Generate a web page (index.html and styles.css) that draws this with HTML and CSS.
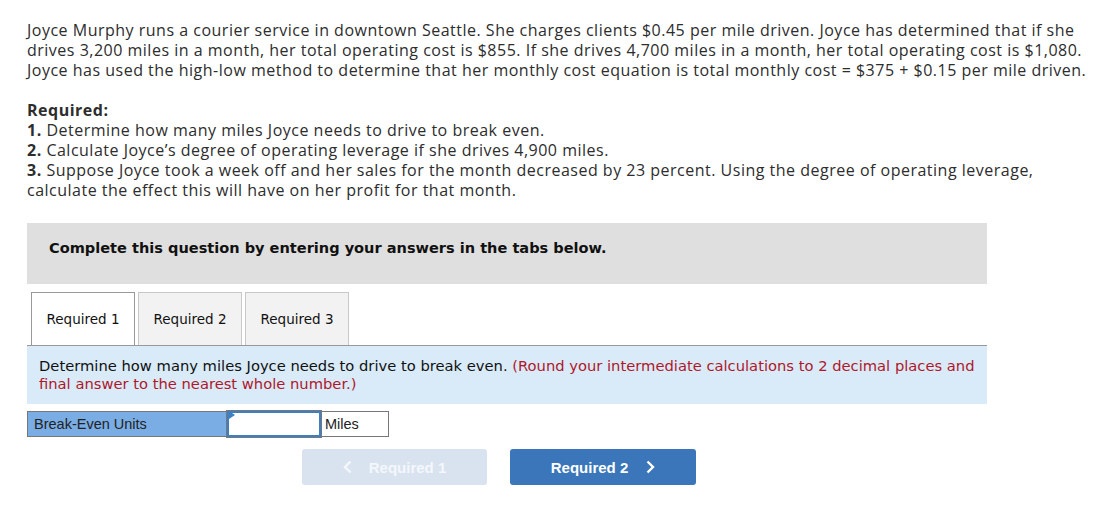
FILE: index.html
```html
<!DOCTYPE html>
<html>
<head>
<meta charset="utf-8">
<link rel="stylesheet" href="styles.css">
</head>
<body>
<div class="page">
  <p class="intro">Joyce Murphy runs a courier service in downtown Seattle. She charges clients $0.45 per mile driven. Joyce has determined that if she<br>drives 3,200 miles in a month, her total operating cost is $855. If she drives 4,700 miles in a month, her total operating cost is $1,080.<br>Joyce has used the high-low method to determine that her monthly cost equation is total monthly cost = $375 + $0.15 per mile driven.</p>
  <div class="required">
    <div class="req-title">Required:</div>
    <div><b>1.</b> Determine how many miles Joyce needs to drive to break even.</div>
    <div><b>2.</b> Calculate Joyce’s degree of operating leverage if she drives 4,900 miles.</div>
    <div><b>3.</b> Suppose Joyce took a week off and her sales for the month decreased by 23 percent. Using the degree of operating leverage,<br>calculate the effect this will have on her profit for that month.</div>
  </div>
  <div class="notice">Complete this question by entering your answers in the tabs below.</div>
  <div class="tabs">
    <div class="tab active">Required 1</div>
    <div class="tab">Required 2</div>
    <div class="tab">Required 3</div>
  </div>
  <div class="instr">Determine how many miles Joyce needs to drive to break even. <span class="red">(Round your intermediate calculations to 2 decimal places and<br>final answer to the nearest whole number.)</span></div>
  <div class="answer">
    <div class="cell label">Break-Even Units</div>
    <div class="cell input"><span class="flag"></span></div>
    <div class="cell unit">Miles</div>
  </div>
  <div class="nav">
    <div class="btn prev"><svg class="chev" width="9" height="14" viewBox="0 0 9 14"><polyline points="7.5,1.5 2,7 7.5,12.5" fill="none" stroke="currentColor" stroke-width="2.4"/></svg>Required 1</div>
    <div class="btn next">Required 2<svg class="chev" width="9" height="14" viewBox="0 0 9 14"><polyline points="1.5,1.5 7,7 1.5,12.5" fill="none" stroke="currentColor" stroke-width="2.4"/></svg></div>
  </div>
</div>
</body>
</html>
```

FILE: styles.css
```css
html, body { margin: 0; padding: 0; background: #fff; }
.page {
  width: 960px;
  margin-left: 27px;
  padding-top: 20px;
  color: #2d2d2d;
  font-family: "Open Sans", "Liberation Sans", sans-serif;
}
.intro {
  margin: 0;
  font-size: 16px;
  letter-spacing: 0.5px;
  line-height: 20px;
  white-space: nowrap;
}
.required {
  margin-top: 20px;
  font-size: 16px;
  letter-spacing: 0.5px;
  line-height: 20px;
  white-space: nowrap;
}
.req-title { font-weight: bold; }
.notice {
  margin-top: 23px;
  height: 61px;
  box-sizing: border-box;
  background: #dfdfdf;
  padding: 16px 0 0 22px;
  font-family: "DejaVu Sans", Verdana, sans-serif;
  font-weight: bold;
  font-size: 14.55px;
  line-height: 18px;
  color: #111;
}
.tabs {
  margin-top: 8px;
  display: flex;
  gap: 3px;
  padding-left: 4px;
  border-bottom: 1px solid #999;
  height: 53px;
}
.tab {
  width: 104px;
  box-sizing: border-box;
  height: 53px;
  border: 1px solid #c8c8c8;
  border-bottom: none;
  background: #f2f2f2;
  display: flex;
  align-items: center;
  justify-content: center;
  font-family: "DejaVu Sans", Verdana, sans-serif;
  font-size: 13.5px;
  color: #111;
}
.tab.active { background: #fff; border-color: #999; }
.instr {
  background: #d9ebf8;
  padding: 11px 12px 11px 12px;
  font-family: "DejaVu Sans", Verdana, sans-serif;
  font-size: 14.72px;
  line-height: 18px;
  color: #111;
  white-space: nowrap;
}
.red { color: #b0172b; }
.answer {
  margin-top: 7px;
  display: flex;
  height: 26px;
  font-family: "Liberation Sans", Arial, sans-serif;
  font-size: 14.5px;
  color: #222;
}
.cell {
  box-sizing: border-box;
  height: 26px;
  border: 1px solid #777;
  display: flex;
  align-items: center;
}
.label { width: 200px; background: #7aade4; padding-left: 6px; border-right: none; }
.input {
  width: 94px;
  background: #fff;
  border: 2px solid #3d7fc3;
  position: relative;
  outline: 1px solid #777;
}
.flag {
  position: absolute;
  left: 0;
  top: 0;
  width: 0;
  height: 0;
  border-top: 4px solid transparent;
  border-bottom: 4px solid transparent;
  border-left: 6px solid #3d7fc3;
  transform: translateY(-2px);
}
.unit { width: 68px; padding-left: 4px; border-left: none; }
.nav {
  margin-top: 12px;
  margin-left: 275px;
  display: flex;
  gap: 23px;
}
.btn {
  width: 185px;
  height: 36px;
  border-radius: 3px;
  display: flex;
  align-items: center;
  justify-content: center;
  font-family: "Liberation Sans", Arial, sans-serif;
  font-weight: bold;
  font-size: 15px;
  color: #fff;
}
.btn.next { width: 186px; }
.btn.prev { background: #d9e3f0; color: #f4f7fb; }
.btn.next { background: #3a76b9; }
.chev { display: block; }
.prev .chev { margin-right: 17px; }
.next .chev { margin-left: 18px; }
```
